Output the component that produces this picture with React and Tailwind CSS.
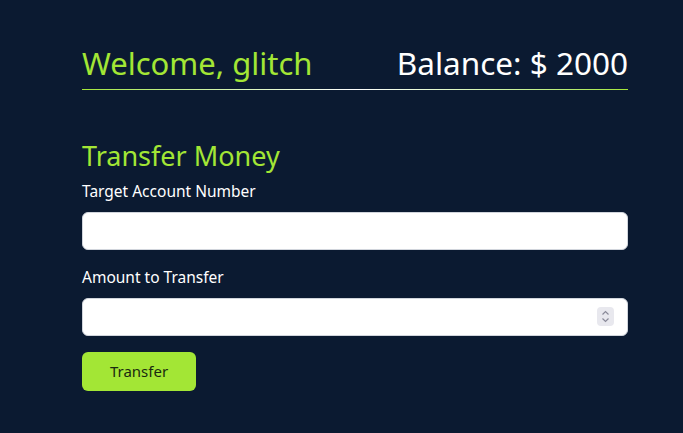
import React, { useState } from 'react';

const font = { fontFamily: '"Noto Sans", "Open Sans", sans-serif' };

export default function App() {
  const [account, setAccount] = useState('');
  const [amount, setAmount] = useState('');

  return (
    <div className="min-h-[433px] w-full bg-[#0b1a31] text-white" style={font}>
      <div className="ml-[82px] w-[546px] pt-[43px]">
        {/* Header */}
        <div className="flex items-end justify-between pb-[6px]">
          <h1 className="text-[31px] leading-[40px] text-[#a3e635]">Welcome, glitch</h1>
          <h2 className="text-[31.5px] leading-[40px] text-white">Balance: $ 2000</h2>
        </div>
        <div className="h-px w-full bg-gradient-to-r from-[#a3e635] via-white to-[#a3e635]"></div>

        {/* Transfer form */}
        <h3 className="mt-[48px] text-[27px] leading-[36px] text-[#a3e635]">Transfer Money</h3>
        <form className="flex flex-col" onSubmit={(e) => e.preventDefault()}>
          <label className="mt-[6px] text-[15.5px] leading-[22px]">Target Account Number</label>
          <input
            type="text"
            value={account}
            onChange={(e) => setAccount(e.target.value)}
            className="mt-[10px] h-[38px] w-full rounded-md border border-gray-300 bg-white px-3 text-black outline-none"
          />
          <label className="mt-[16px] text-[15.5px] leading-[22px]">Amount to Transfer</label>
          <div className="relative mt-[10px]">
            <input
              type="text"
              value={amount}
              onChange={(e) => setAmount(e.target.value)}
              className="h-[38px] w-full rounded-md border border-gray-300 bg-white px-3 text-black outline-none"
            />
            <span className="pointer-events-none absolute right-[14px] top-[9px] flex h-[19px] w-[17px] items-center justify-center rounded-sm bg-[#e8e8ee]">
              <svg width="9" height="13" viewBox="0 0 9 13" fill="none" stroke="#8a8a99" strokeWidth="1.2">
                <path d="M1.5 4.5 L4.5 1.5 L7.5 4.5" />
                <path d="M1.5 8.5 L4.5 11.5 L7.5 8.5" />
              </svg>
            </span>
          </div>
          <button
            type="submit"
            className="mt-[16px] h-[39px] w-[114px] rounded-md bg-[#a3e635] text-[15px] text-[#1a2a10]"
          >
            Transfer
          </button>
        </form>
      </div>
    </div>
  );
}
